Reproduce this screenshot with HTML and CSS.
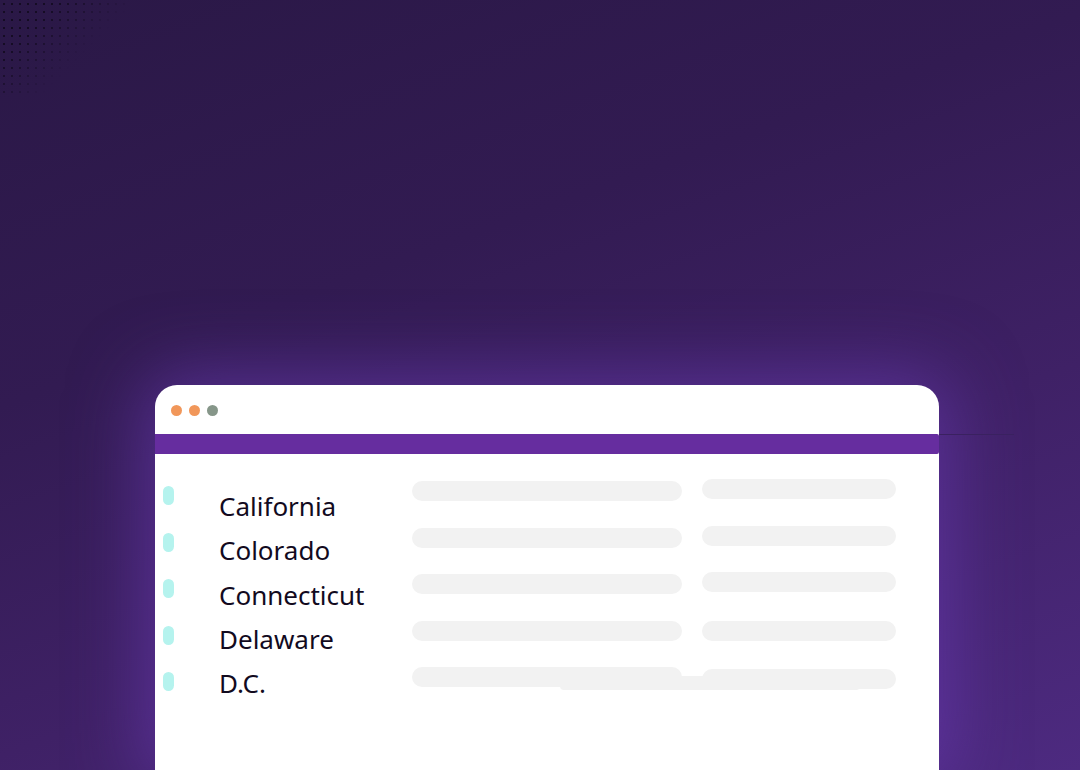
FILE: index.html
```html
<!DOCTYPE html>
<html lang="en">
<head>
    <meta charset="UTF-8">
    <meta name="viewport" content="width=device-width, initial-scale=1.0">
    <title>States list</title>
    <link rel="stylesheet" href="styles.css">
</head>
<body>
    <div class="dots"></div>
    <div class="window">
        <div class="window-top">
            <span class="dot orange"></span>
            <span class="dot orange"></span>
            <span class="dot grey"></span>
        </div>
        <div class="window-bar"></div>
        <div class="window-body">
            <div class="pills">
                <span class="pill"></span>
                <span class="pill"></span>
                <span class="pill"></span>
                <span class="pill"></span>
                <span class="pill"></span>
            </div>
            <ul class="names">
                <li>California</li>
                <li>Colorado</li>
                <li>Connecticut</li>
                <li>Delaware</li>
                <li>D.C.</li>
            </ul>
            <div class="bars">
                <div class="bar-col wide">
                    <span class="bar"></span>
                    <span class="bar"></span>
                    <span class="bar"></span>
                    <span class="bar"></span>
                    <span class="bar"></span>
                </div>
                <div class="bar-col narrow">
                    <span class="bar"></span>
                    <span class="bar"></span>
                    <span class="bar"></span>
                    <span class="bar"></span>
                    <span class="bar"></span>
                </div>
                <span class="bar stray"></span>
            </div>
        </div>
    </div>
</body>
</html>
```

FILE: styles.css
```css
* {
    box-sizing: border-box;
}

html, body {
    height: 100%;
}

body {
    margin: 0;
    overflow: hidden;
    position: relative;
    font-family: 'Noto Sans', 'Open Sans', sans-serif;
    background: linear-gradient(160deg, #2a1846 0%, #321b52 35%, #3f2166 65%, #4d2a80 100%);
}

.dots {
    position: absolute;
    top: 0;
    left: 0;
    width: 125px;
    height: 95px;
    background-image: radial-gradient(circle, #150c24 1px, transparent 1.5px);
    background-size: 8px 8px;
    -webkit-mask-image: linear-gradient(135deg, #000 25%, transparent 62%);
    mask-image: linear-gradient(135deg, #000 25%, transparent 62%);
}

.window {
    margin: 385px 0 0 155px;
    width: 784px;
    height: 385px;
    background-color: #fff;
    border-radius: 22px 22px 0 0;
    box-shadow: 0 0 70px 12px rgba(112, 62, 190, 0.55);
}

.window-top {
    display: flex;
    align-items: center;
    gap: 7px;
    height: 49px;
    padding: 1px 0 0 16px;
}

.dot {
    width: 11px;
    height: 11px;
    border-radius: 50%;
}

.dot.orange {
    background-color: #f1975a;
}

.dot.grey {
    background-color: #869689;
}

.window-bar {
    position: relative;
    height: 20px;
    background-color: #662d9f;
    border-radius: 0 2px 2px 0;
}

.window-bar::after {
    content: "";
    position: absolute;
    left: 100%;
    top: 0;
    width: 75px;
    height: 1px;
    background-color: #3a2160;
}

.window-body {
    display: flex;
    align-items: flex-start;
    padding: 0 0 0 8px;
}

.pills {
    display: flex;
    flex-direction: column;
    gap: 27.5px;
    margin-top: 32px;
    width: 11px;
}

.pill {
    width: 11px;
    height: 19px;
    border-radius: 6px;
    background-color: #b5f3ee;
}

.names {
    list-style: none;
    margin: 30px 0 0 45px;
    padding: 0;
    width: 193px;
    font-size: 26px;
    line-height: 44.3px;
    color: #120a1e;
}

.bars {
    position: relative;
    display: flex;
    gap: 20px;
    margin-top: 25px;
}

.bar-col {
    display: flex;
    flex-direction: column;
    gap: 26.5px;
    position: relative;
    z-index: 1;
}

.bar-col.wide {
    margin-top: 2px;
}

.bar {
    display: block;
    height: 20px;
    border-radius: 10px;
    background-color: #f2f2f2;
}

.wide .bar {
    width: 270px;
}

.narrow .bar {
    width: 194px;
}

.narrow .bar:nth-child(4),
.narrow .bar:nth-child(5) {
    margin-top: 2px;
}

.bar.stray {
    position: absolute;
    left: 148px;
    top: 197px;
    width: 300px;
    height: 14px;
    border-radius: 4px;
}
```
